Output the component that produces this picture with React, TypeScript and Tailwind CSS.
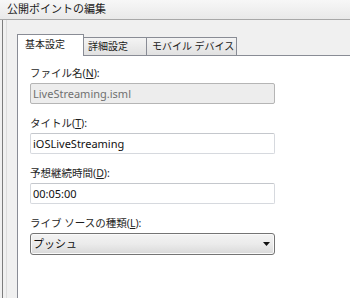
import React from "react";

const jp = { fontFamily: '"Noto Sans", "Noto Sans CJK JP", sans-serif' };

function Label({ text, hotkey }: { text: string; hotkey: string }) {
  return (
    <div className="h-[16px] text-[10.5px] leading-[16px] text-[#1e1e1e]">
      {text}(<span className="underline">{hotkey}</span>):
    </div>
  );
}

export default function App() {
  return (
    <div className="w-[350px] h-[298px] bg-[#f0f0f0] overflow-hidden flex flex-col" style={jp}>
      {/* title bar */}
      <div className="h-[20px] shrink-0 border-b border-[#a8a8a8] bg-gradient-to-b from-[#f7f7f7] to-[#e9e9e9] pl-[7px] text-[11px] leading-[18px] text-[#1a1a1a]">
        公開ポイントの編集
      </div>

      <div className="flex-1 ml-[2px] border-l border-[#7c7c7c] pl-[3px]">
        <div className="h-full border-l border-[#dcdcdc] pl-[10px] pt-[14px] flex flex-col">
          {/* tabs */}
          <div className="flex items-end -mb-px relative z-10 text-[10px]">
            <div className="w-[67px] h-[22px] bg-white border border-b-0 border-[#898c95] pl-[7px] leading-[18px] text-[#1a1a1a]">
              基本設定
            </div>
            <div className="w-[63px] h-[18px] mb-px border border-b-0 border-l-0 border-[#898c95] bg-gradient-to-b from-[#f4f4f4] to-[#e1e1e1] pl-[4px] leading-[17px] text-[#1a1a1a]">
              詳細設定
            </div>
            <div className="w-[91px] h-[18px] mb-px -ml-px border border-b-0 border-[#898c95] bg-gradient-to-b from-[#f4f4f4] to-[#e1e1e1] pl-[5px] leading-[17px] text-[#1a1a1a]">
              モバイル デバイス
            </div>
          </div>

          {/* panel */}
          <div className="flex-1 bg-white border-t border-l border-[#898c95] pl-[12px] pt-[9px]">
            <Label text="ファイル名" hotkey="N" />
            <div className="mt-[2px] mb-[11px] w-[245px] h-[21px] border border-[#b5b5b5] rounded-[2px] bg-[#ededed] pl-[2px] text-[11px] leading-[19px] text-[#707070]">
              LiveStreaming.isml
            </div>

            <Label text="タイトル" hotkey="T" />
            <div className="mt-[2px] mb-[11px] w-[245px] h-[21px] border border-[#d6d9de] border-t-[#c4c7cc] rounded-[2px] bg-white pl-[2px] text-[11px] leading-[19px] text-[#111]">
              iOSLiveStreaming
            </div>

            <Label text="予想継続時間" hotkey="D" />
            <div className="mt-[2px] mb-[11px] w-[245px] h-[21px] border border-[#d6d9de] border-t-[#c4c7cc] rounded-[2px] bg-white pl-[2px] text-[11px] leading-[19px] text-[#111]">
              00:05:00
            </div>

            <Label text="ライブ ソースの種類" hotkey="L" />
            <div className="mt-[2px] w-[245px] h-[22px] border border-[#747474] rounded-[3px] bg-gradient-to-b from-[#f3f3f3] via-[#ebebeb] to-[#d9d9d9] pl-[2px] pr-[3px] flex items-center justify-between text-[11px] text-[#111] shadow-[inset_0_0_0_1px_#fafafa]">
              <span>プッシュ</span>
              <svg width="7" height="4" viewBox="0 0 7 4" className="mr-[1px]">
                <path d="M0 0h7L3.5 4z" fill="#111" />
              </svg>
            </div>
          </div>
        </div>
      </div>
    </div>
  );
}
